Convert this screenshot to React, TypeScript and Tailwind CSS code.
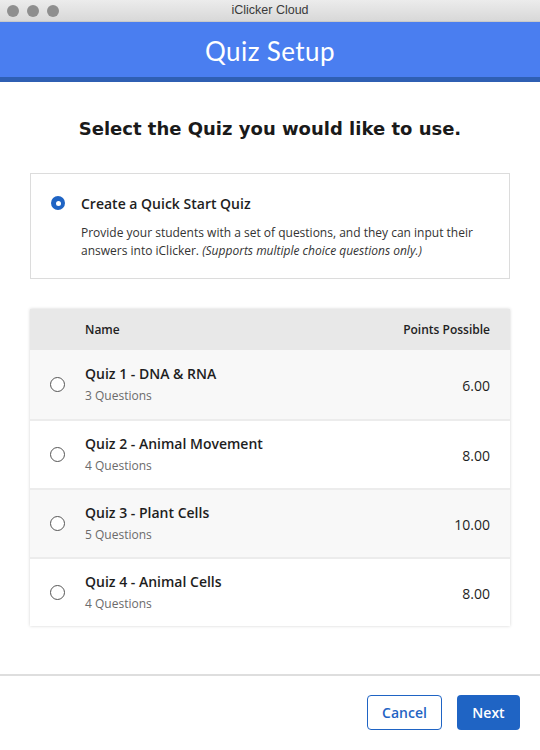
const quizzes = [
  { name: "Quiz 1 - DNA & RNA", questions: 3, points: "6.00" },
  { name: "Quiz 2 - Animal Movement", questions: 4, points: "8.00" },
  { name: "Quiz 3 - Plant Cells", questions: 5, points: "10.00" },
  { name: "Quiz 4 - Animal Cells", questions: 4, points: "8.00" },
];

export default function App() {
  return (
    <div className="flex h-[750px] w-[540px] flex-col bg-white" style={{ fontFamily: "'Open Sans', sans-serif" }}>
      {/* Window title bar */}
      <div className="relative flex h-[22px] items-center justify-center border-b border-[#c9c9c9] bg-gradient-to-b from-[#ececec] to-[#d8d8d8]">
        <div className="absolute left-[7px] top-[5px] flex gap-[8px]">
          <span className="h-[12px] w-[12px] rounded-full bg-[#8e8e8e]" />
          <span className="h-[12px] w-[12px] rounded-full bg-[#8e8e8e]" />
          <span className="h-[12px] w-[12px] rounded-full bg-[#8e8e8e]" />
        </div>
        <span className="text-[12.5px] text-[#3a3a3a]" style={{ fontFamily: "'Liberation Sans', sans-serif" }}>iClicker Cloud</span>
      </div>

      {/* Blue header */}
      <div className="flex h-[55px] items-center justify-center bg-[#4a7ef0] pt-[3px]">
        <h1 className="text-[26px] font-normal tracking-[0.4px] text-white" style={{ fontFamily: "Lato, sans-serif" }}>Quiz Setup</h1>
      </div>
      <div className="h-[5px] bg-[#2f5fb3]" />

      <div className="flex flex-1 flex-col px-[30px]">
        <h2 className="mt-[33px] text-center text-[18px] font-bold text-[#1a1a1a]" style={{ fontFamily: "'DejaVu Sans', sans-serif" }}>
          Select the Quiz you would like to use.
        </h2>

        {/* Quick start option */}
        <div className="mt-[31px] flex gap-[16px] border border-[#dcdcdc] px-[20px] pb-[18px] pt-[19px]">
          <span className="mt-[3px] flex h-[14px] w-[14px] shrink-0 items-center justify-center rounded-full bg-[#1f64c4]">
            <span className="h-[5px] w-[5px] rounded-full bg-white" />
          </span>
          <div>
            <div className="text-[14px] font-semibold text-[#1e1e1e]">Create a Quick Start Quiz</div>
            <p className="mt-[10px] text-[12px] leading-[18px] text-[#333]">
              Provide your students with a set of questions, and they can input their answers into iClicker.{" "}
              <em>(Supports multiple choice questions only.)</em>
            </p>
          </div>
        </div>

        {/* Quiz table */}
        <div className="mt-[30px] shadow-[0_0_3px_rgba(0,0,0,0.18)]">
          <div className="flex h-[41px] items-center bg-[#e8e8e8] pl-[55px] pr-[20px] text-[12px] font-semibold text-[#222]">
            <span className="flex-1">Name</span>
            <span>Points Possible</span>
          </div>
          {quizzes.map((q, i) => (
            <div
              key={q.name}
              className={`flex h-[69px] items-center pl-[20px] pr-[20px] ${i % 2 === 0 ? "bg-[#f8f8f8]" : "bg-white"} ${i > 0 ? "border-t-2 border-[#ececec]" : ""}`}
            >
              <span className="h-[15px] w-[15px] shrink-0 rounded-full border border-[#555] bg-white" />
              <div className="ml-[20px] flex-1">
                <div className="text-[14px] font-semibold leading-[20px] text-[#1e1e1e]">{q.name}</div>
                <div className="mt-[3px] text-[12px] text-[#6b6b6b]">{q.questions} Questions</div>
              </div>
              <span className="mt-[2px] text-[14px] text-[#1e1e1e]">{q.points}</span>
            </div>
          ))}
        </div>
      </div>

      {/* Footer */}
      <div className="flex h-[76px] items-start justify-end gap-[15px] border-t-2 border-[#dedede] pr-[20px] pt-[19px]">
        <button className="h-[35px] w-[75px] rounded-[4px] border border-[#1f64c4] bg-white text-[14px] font-semibold text-[#1f64c4]">
          Cancel
        </button>
        <button className="h-[35px] w-[63px] rounded-[4px] bg-[#1f64c4] text-[14px] font-semibold text-white">
          Next
        </button>
      </div>
    </div>
  );
}
